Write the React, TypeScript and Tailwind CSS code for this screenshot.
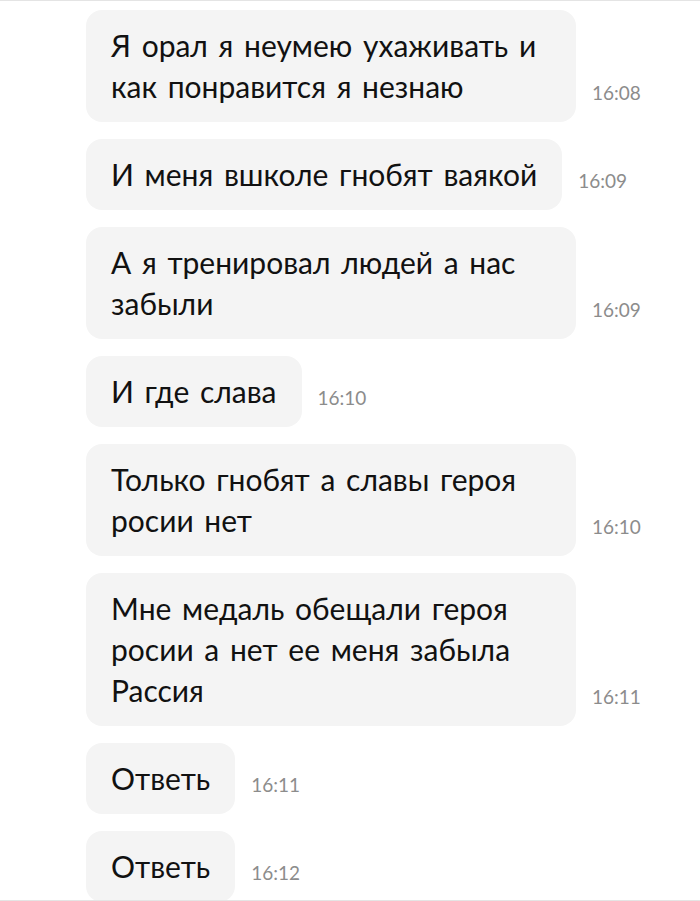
const MESSAGES = [
  { text: "Я орал я неумею ухаживать и как понравится я незнаю", time: "16:08" },
  { text: "И меня вшколе гнобят ваякой", time: "16:09" },
  { text: "А я тренировал людей а нас забыли", time: "16:09" },
  { text: "И где слава", time: "16:10" },
  { text: "Только гнобят а славы героя росии нет", time: "16:10" },
  { text: "Мне медаль обещали героя росии а нет ее меня забыла Рассия", time: "16:11" },
  { text: "Ответь", time: "16:11" },
  { text: "Ответь", time: "16:12" },
];

export default function App() {
  return (
    <div
      className="h-[901px] w-[700px] overflow-hidden border-y border-[#e4e4e4] bg-white"
      style={{ fontFamily: "Lato, 'Noto Sans', sans-serif" }}
    >
      <div className="flex flex-col gap-[17px] pl-[86px] pt-[9px]">
        {MESSAGES.map((m, i) => (
          <div key={i} className="flex items-end gap-[16px]">
            <div className="max-w-[490px] rounded-[16px] bg-[#f4f4f4] px-[25px] py-[15px] text-[30px] leading-[41px] [word-spacing:3px] text-[#111]">
              {m.text}
            </div>
            <span className="pb-[18px] text-[19px] leading-[22px] text-[#8c8c8c]">{m.time}</span>
          </div>
        ))}
      </div>
    </div>
  );
}
